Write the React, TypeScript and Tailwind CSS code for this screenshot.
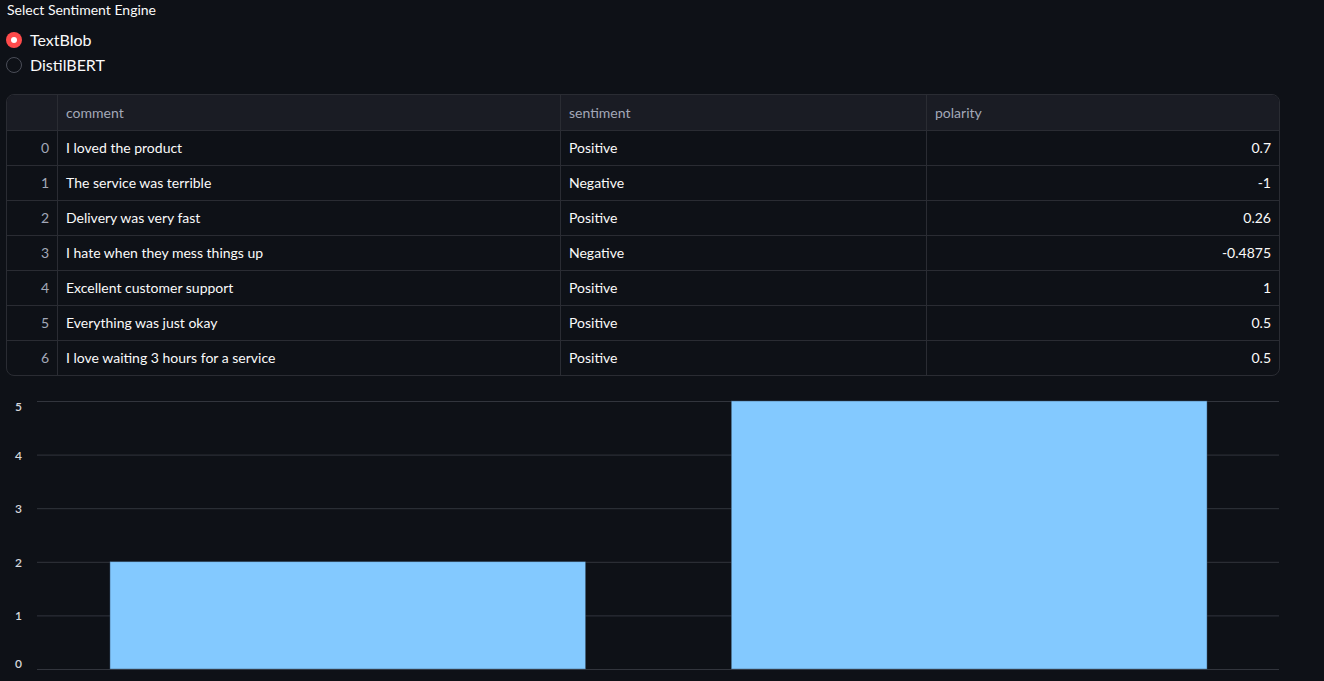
import React from "react";

const rows = [
  { comment: "I loved the product", sentiment: "Positive", polarity: "0.7" },
  { comment: "The service was terrible", sentiment: "Negative", polarity: "-1" },
  { comment: "Delivery was very fast", sentiment: "Positive", polarity: "0.26" },
  { comment: "I hate when they mess things up", sentiment: "Negative", polarity: "-0.4875" },
  { comment: "Excellent customer support", sentiment: "Positive", polarity: "1" },
  { comment: "Everything was just okay", sentiment: "Positive", polarity: "0.5" },
  { comment: "I love waiting 3 hours for a service", sentiment: "Positive", polarity: "0.5" },
];

function Radio({ label, checked }: { label: string; checked?: boolean }) {
  return (
    <div className="flex items-center h-[25px] gap-2">
      {checked ? (
        <span className="w-4 h-4 rounded-full bg-[#ff4b4b] flex items-center justify-center">
          <span className="w-[6px] h-[6px] rounded-full bg-white" />
        </span>
      ) : (
        <span className="w-4 h-4 rounded-full border border-[#4a4d57]" />
      )}
      <span className="text-[16px] text-[#fafafa]">{label}</span>
    </div>
  );
}

function Chart() {
  const top = 21;
  const unit = 53.6;
  const y = (v: number) => top + (5 - v) * unit;
  return (
    <svg width="1324" height="301" className="block">
      {[0, 1, 2, 3, 4, 5].map((v) => (
        <g key={v}>
          <line x1="37" x2="1279" y1={y(v) + 0.5} y2={y(v) + 0.5} stroke="#32353d" strokeWidth="1" />
          <text
            x="22"
            y={v === 0 ? y(v) - 1 : v === 5 ? y(v) + 10 : y(v) + 5}
            textAnchor="end"
            fontSize="12"
            fontWeight="600"
            fill="#d5d7dc"
          >
            {v}
          </text>
        </g>
      ))}
      <rect x="110" y={y(2)} width="475.5" height={y(0) - y(2)} fill="#83c9ff" stroke="#3d5a75" strokeWidth="0.5" />
      <rect x="731.3" y={y(5)} width="475.7" height={y(0) - y(5)} fill="#83c9ff" stroke="#3d5a75" strokeWidth="0.5" />
    </svg>
  );
}

export default function App() {
  return (
    <div
      className="w-[1324px] h-[681px] bg-[#0e1117] text-[#fafafa] overflow-hidden"
      style={{ fontFamily: "Lato, 'Noto Sans', sans-serif" }}
    >
      <div className="pl-[6px]">
        <div className="text-[14px] leading-[20px] h-[20px] pl-[1px]">Select Sentiment Engine</div>
        <div className="pt-[7px]">
          <Radio label="TextBlob" checked />
          <Radio label="DistilBERT" />
        </div>
        <div className="mt-[17px] w-[1274px] rounded-lg border border-[#2a2c33] overflow-hidden text-[14px]">
          <div className="grid grid-cols-[51px_503px_366px_1fr] h-[36px] bg-[#1a1c24] text-[#a3a8b8] border-b border-[#2a2c33]">
            <div className="border-r border-[#2a2c33]" />
            <div className="border-r border-[#2a2c33] flex items-center px-2">comment</div>
            <div className="border-r border-[#2a2c33] flex items-center px-2">sentiment</div>
            <div className="flex items-center px-2">polarity</div>
          </div>
          {rows.map((r, i) => (
            <div
              key={i}
              className={`grid grid-cols-[51px_503px_366px_1fr] ${i < rows.length - 1 ? "h-[35px] border-b border-[#2a2c33]" : "h-[34px]"}`}
            >
              <div className="border-r border-[#2a2c33] flex items-center justify-end px-2 pb-[1px] text-[#a3a8b8]">{i}</div>
              <div className="border-r border-[#2a2c33] flex items-center px-2 pb-[1px]">{r.comment}</div>
              <div className="border-r border-[#2a2c33] flex items-center px-2 pb-[1px]">{r.sentiment}</div>
              <div className="flex items-center justify-end px-2 pb-[1px]">{r.polarity}</div>
            </div>
          ))}
        </div>
      </div>
      <div className="mt-[4px]">
        <Chart />
      </div>
    </div>
  );
}
